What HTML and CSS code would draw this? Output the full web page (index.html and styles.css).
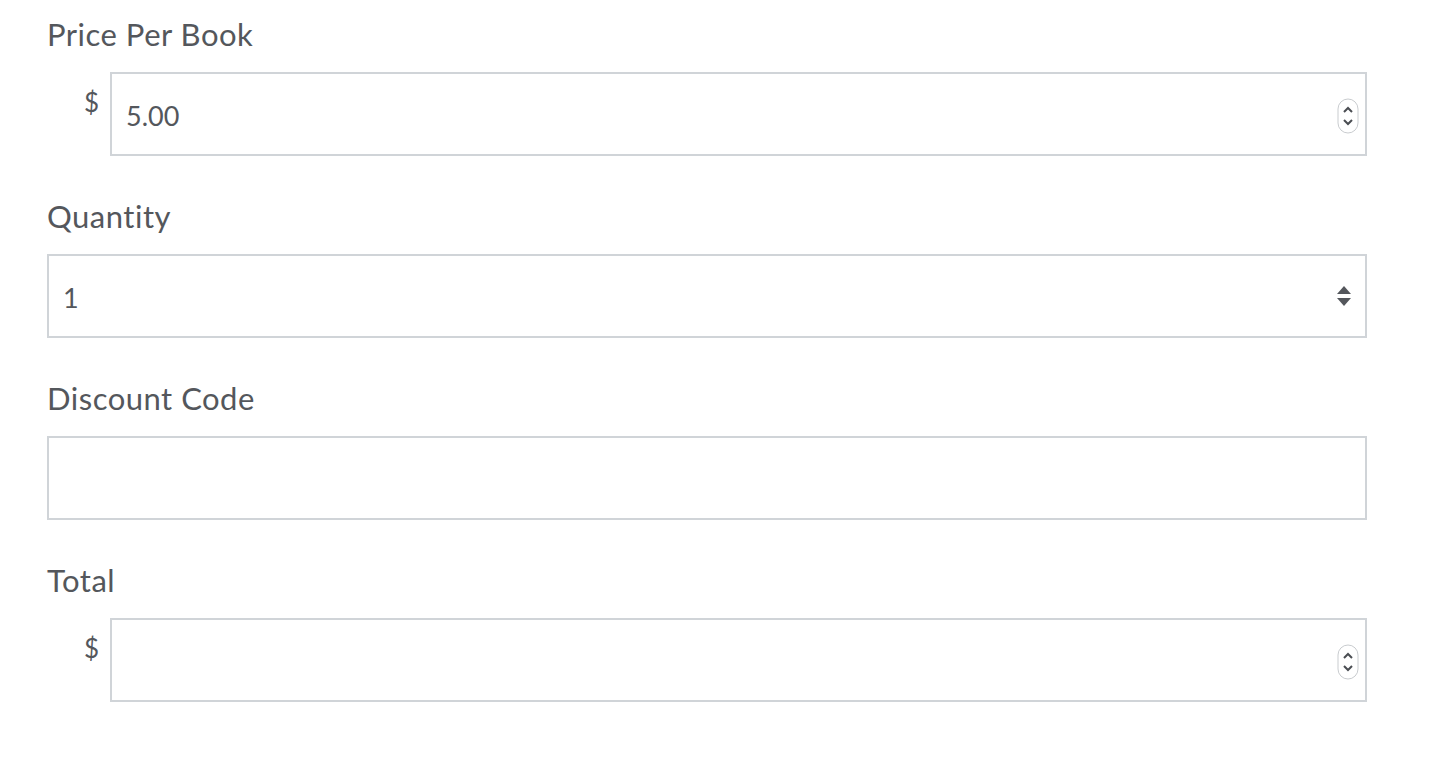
FILE: index.html
```html
<!DOCTYPE html>
<html>
<head>
<meta charset="utf-8">
<link rel="stylesheet" href="styles.css">
</head>
<body>
<form class="form">
  <div class="field">
    <div class="label">Price Per Book</div>
    <div class="row">
      <span class="prefix">$</span>
      <div class="box">
        <span class="value">5.00</span>
        <svg class="spin" width="22" height="36" viewBox="0 0 22 36">
          <rect x="1" y="1" width="20" height="34" rx="10" fill="#fff" stroke="#c9cccf" stroke-width="1"/>
          <path d="M7 14 L11 10 L15 14" fill="none" stroke="#4a4d52" stroke-width="2"/>
          <path d="M7 22 L11 26 L15 22" fill="none" stroke="#4a4d52" stroke-width="2"/>
        </svg>
      </div>
    </div>
  </div>
  <div class="field">
    <div class="label">Quantity</div>
    <div class="box box-full">
      <span class="value">1</span>
      <svg class="arrows" width="16" height="24" viewBox="0 0 16 24">
        <path d="M1 10 L8 2 L15 10 Z" fill="#54575c"/>
        <path d="M1 14 L8 22 L15 14 Z" fill="#54575c"/>
      </svg>
    </div>
  </div>
  <div class="field">
    <div class="label">Discount Code</div>
    <div class="box box-full"></div>
  </div>
  <div class="field">
    <div class="label">Total</div>
    <div class="row">
      <span class="prefix">$</span>
      <div class="box">
        <span class="value"></span>
        <svg class="spin" width="22" height="36" viewBox="0 0 22 36">
          <rect x="1" y="1" width="20" height="34" rx="10" fill="#fff" stroke="#c9cccf" stroke-width="1"/>
          <path d="M7 14 L11 10 L15 14" fill="none" stroke="#4a4d52" stroke-width="2"/>
          <path d="M7 22 L11 26 L15 22" fill="none" stroke="#4a4d52" stroke-width="2"/>
        </svg>
      </div>
    </div>
  </div>
</form>
</body>
</html>
```

FILE: styles.css
```css
html, body {
  margin: 0;
  padding: 0;
  background: #fff;
}
body {
  font-family: Lato, "Open Sans", sans-serif;
  color: #54575c;
}
.form {
  width: 1320px;
  padding: 16px 0 0 47px;
}
.field {
  margin-bottom: 42px;
}
.label {
  font-size: 31px;
  letter-spacing: 0.5px;
  line-height: 36px;
  height: 36px;
  margin-bottom: 20px;
}
.row {
  display: flex;
  align-items: flex-start;
}
.prefix {
  width: 63px;
  box-sizing: border-box;
  padding-right: 11px;
  padding-top: 14px;
  text-align: right;
  font-size: 26px;
  line-height: 32px;
}
.box {
  flex: 1;
  height: 84px;
  box-sizing: border-box;
  border: 2px solid #d0d4d8;
  display: flex;
  align-items: center;
  justify-content: space-between;
  padding: 0 6px 0 14px;
  font-size: 27px;
}
.box-full {
  width: 1320px;
  flex: none;
  padding: 0 13px 0 14px;
}
.value {
  padding-top: 2px;
}
.spin {
  display: block;
  margin-top: 4px;
}
.arrows {
  display: block;
}
```
